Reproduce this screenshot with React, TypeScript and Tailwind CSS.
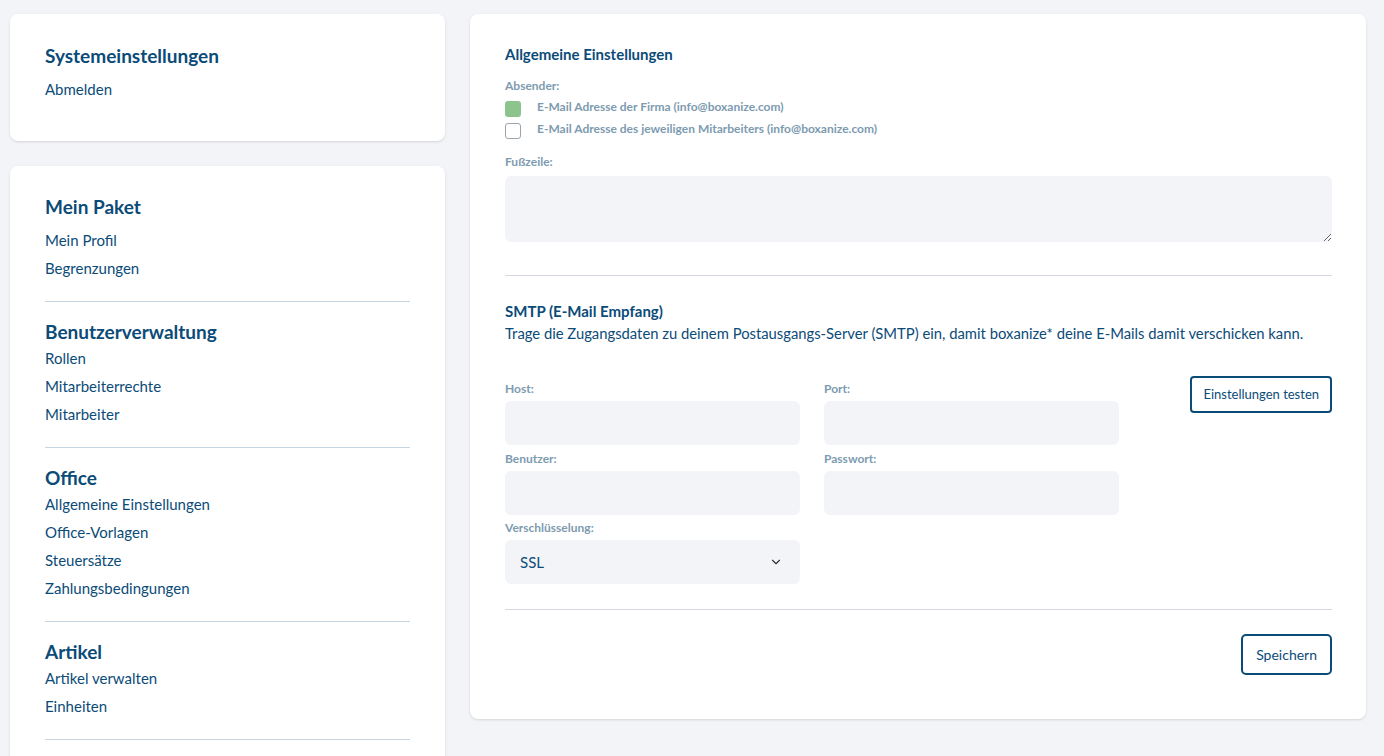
import { ChevronDown } from 'lucide-react';

const sections = [
  { title: 'Mein Paket', items: ['Mein Profil', 'Begrenzungen'], first: true },
  { title: 'Benutzerverwaltung', items: ['Rollen', 'Mitarbeiterrechte', 'Mitarbeiter'] },
  { title: 'Office', items: ['Allgemeine Einstellungen', 'Office-Vorlagen', 'Steuersätze', 'Zahlungsbedingungen'] },
  { title: 'Artikel', items: ['Artikel verwalten', 'Einheiten'] },
];

const Label = ({ children }: { children: React.ReactNode }) => (
  <div className="text-[12px] leading-[14px] font-bold text-[#7d9bb0]">{children}</div>
);

const Input = () => <div className="h-[44px] rounded-md bg-[#f3f4f8]" />;

export default function App() {
  return (
    <div
      className="min-h-screen bg-[#f3f4f8] flex gap-[25px] pl-[10px] pr-[18px] pt-[14px] text-[#0b4b78]"
      style={{ fontFamily: 'Lato, "Open Sans", sans-serif' }}
    >
      {/* Left column */}
      <div className="w-[435px] shrink-0 flex flex-col gap-[25px]">
        <div className="bg-white rounded-lg shadow-sm px-[35px] pt-[30px] pb-[42px]">
          <h2 className="text-[19px] leading-[24px] font-bold">Systemeinstellungen</h2>
          <div className="mt-[11px] text-[15px] leading-[20px]">Abmelden</div>
        </div>

        <div className="bg-white rounded-t-lg shadow-sm px-[35px] pt-[29px] pb-10">
          {sections.map((s) => (
            <div key={s.title} className="border-b border-[#c5d5e2] pb-[19px] mb-[18px]">
              <h2 className="text-[19px] leading-[24px] font-bold">{s.title}</h2>
              <div className={s.first ? 'mt-[7px]' : ''}>
                {s.items.map((i) => (
                  <div key={i} className="text-[15px] leading-[28px]">
                    {i}
                  </div>
                ))}
              </div>
            </div>
          ))}
          <div className="h-[60px]" />
        </div>
      </div>

      {/* Right card */}
      <div className="flex-1 self-start bg-white rounded-lg shadow-sm pl-[35px] pr-[34px] pt-[30px] pb-[44px]">
        <h2 className="text-[15px] leading-[20px] font-bold">Allgemeine Einstellungen</h2>

        <div className="mt-[15px]">
          <Label>Absender:</Label>
        </div>
        <div className="mt-[8px] flex flex-col gap-[6px]">
          <div className="flex items-start gap-4 h-4">
            <div className="w-4 h-4 rounded-[3px] bg-[#8dc48d]" />
            <span className="text-[12px] leading-[12px] font-bold text-[#7d9bb0]">
              E-Mail Adresse der Firma (info@boxanize.com)
            </span>
          </div>
          <div className="flex items-start gap-4 h-4">
            <div className="w-4 h-4 rounded-[3px] border border-[#9aa5ad] bg-white" />
            <span className="text-[12px] leading-[12px] font-bold text-[#7d9bb0]">
              E-Mail Adresse des jeweiligen Mitarbeiters (info@boxanize.com)
            </span>
          </div>
        </div>

        <div className="mt-[16px]">
          <Label>Fußzeile:</Label>
        </div>
        <textarea className="mt-[7px] block w-full h-[66px] rounded-md bg-[#f3f4f8] resize-y outline-none" />

        <div className="mt-[33px] border-t border-[#d3d9de]" />

        <h2 className="mt-[25px] text-[15px] leading-[20px] font-bold">SMTP (E-Mail Empfang)</h2>
        <p className="mt-[2px] text-[14.8px] leading-[20px]">
          Trage die Zugangsdaten zu deinem Postausgangs-Server (SMTP) ein, damit boxanize* deine E-Mails damit
          verschicken kann.
        </p>

        <div className="mt-[33px] grid grid-cols-[295px_295px_1fr] gap-x-6">
          <div className="pt-[6px]">
            <Label>Host:</Label>
            <div className="mt-[5px]">
              <Input />
            </div>
          </div>
          <div className="pt-[6px]">
            <Label>Port:</Label>
            <div className="mt-[5px]">
              <Input />
            </div>
          </div>
          <div className="flex justify-end items-start">
            <button className="h-[37px] px-[11px] rounded-[4px] border-2 border-[#0b4b78] text-[13px] text-[#0b4b78]">
              Einstellungen testen
            </button>
          </div>

          <div className="mt-[7px]">
            <Label>Benutzer:</Label>
            <div className="mt-[5px]">
              <Input />
            </div>
          </div>
          <div className="mt-[7px]">
            <Label>Passwort:</Label>
            <div className="mt-[5px]">
              <Input />
            </div>
          </div>
          <div />

          <div className="mt-[6px]">
            <Label>Verschlüsselung:</Label>
            <div className="mt-[5px] h-[44px] rounded-md bg-[#f3f4f8] flex items-center justify-between pl-[15px] pr-[17px]">
              <span className="text-[15px]">SSL</span>
              <ChevronDown className="w-[14px] h-[14px] text-[#333]" strokeWidth={2} />
            </div>
          </div>
        </div>

        <div className="mt-[25px] border-t border-[#d3d9de]" />

        <div className="mt-[24px] flex justify-end">
          <button className="h-[41px] px-[13px] rounded-[5px] border-2 border-[#0b4b78] text-[14px] text-[#0b4b78]">
            Speichern
          </button>
        </div>
      </div>
    </div>
  );
}
